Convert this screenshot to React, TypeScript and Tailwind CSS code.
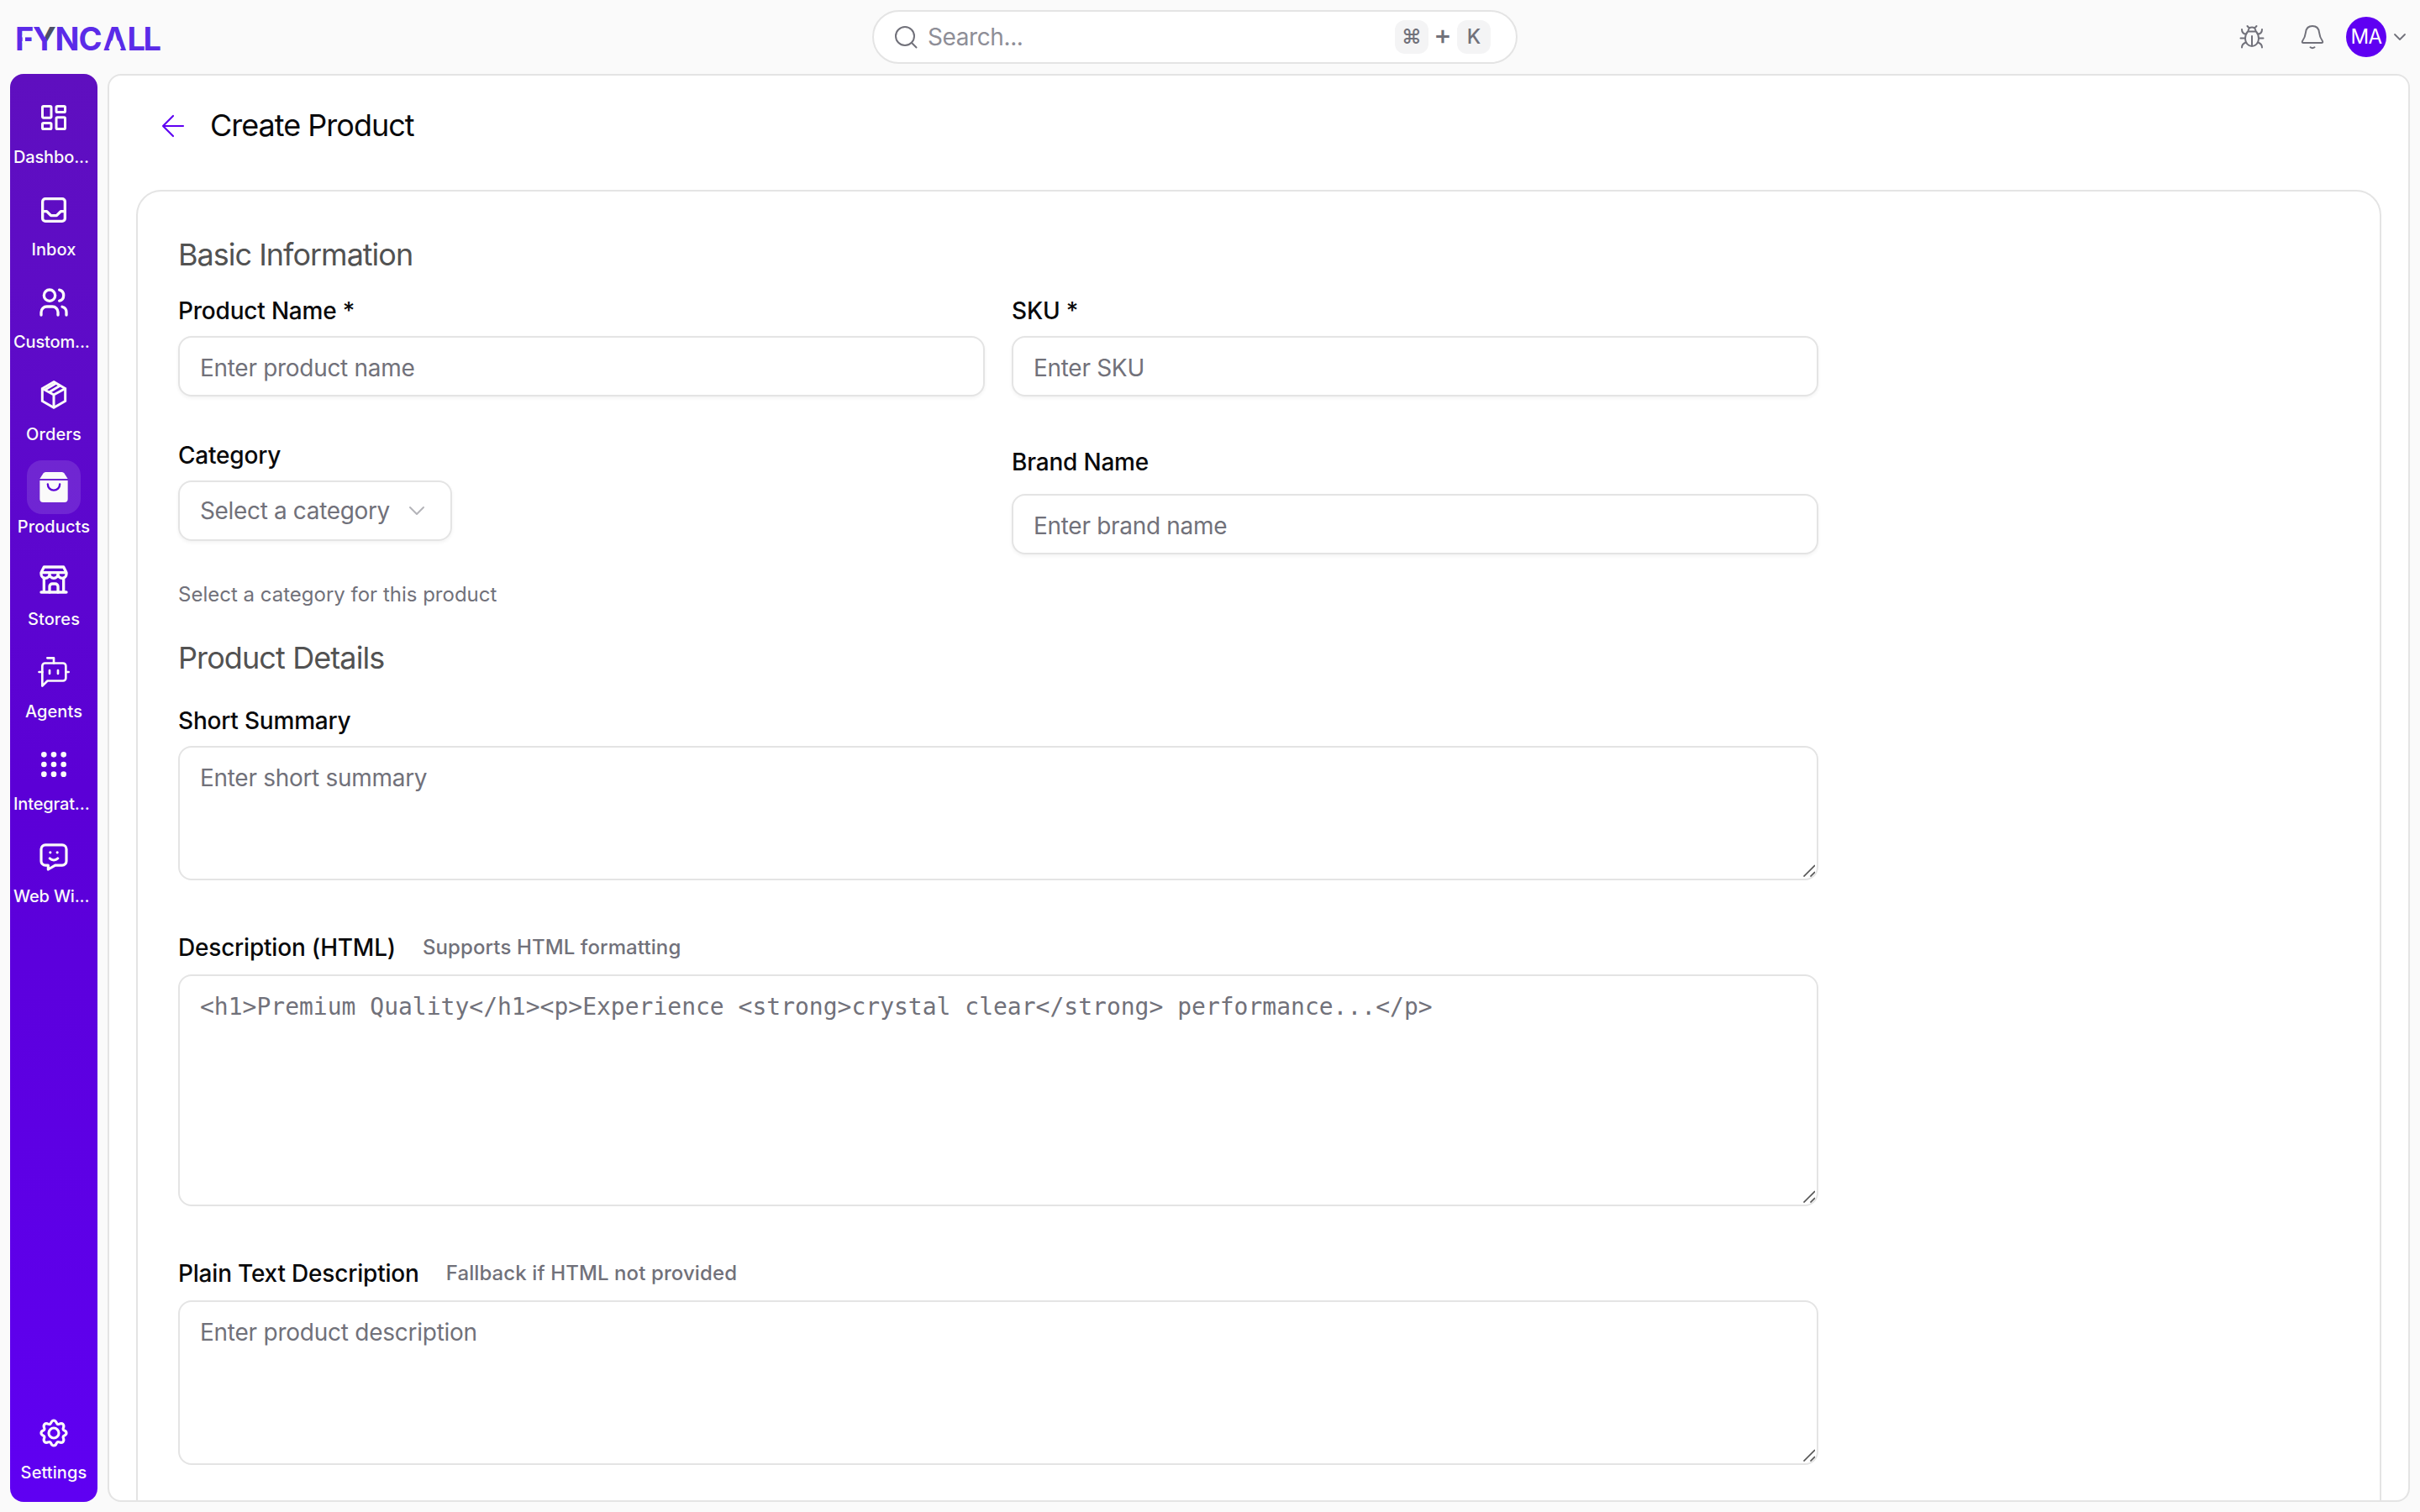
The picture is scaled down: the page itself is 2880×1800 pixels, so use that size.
import type { ReactNode } from 'react'

type NavItem = { label: string; icon: ReactNode; active?: boolean }

function Icon({ size = 40, stroke = 1.5, children }: { size?: number; stroke?: number; children: ReactNode }) {
  return (
    <svg
      width={size}
      height={size}
      viewBox="0 0 24 24"
      fill="none"
      stroke="currentColor"
      strokeWidth={stroke}
      strokeLinecap="round"
      strokeLinejoin="round"
    >
      {children}
    </svg>
  )
}

const navItems: NavItem[] = [
  {
    label: 'Dashbo...',
    icon: (
      <Icon stroke={1.8}>
        <rect x="3.9" y="3.9" width="6.3" height="8.2" rx="0.8" />
        <rect x="13.8" y="3.9" width="6.3" height="4.2" rx="0.8" />
        <rect x="3.9" y="15.9" width="6.3" height="4.2" rx="0.8" />
        <rect x="13.8" y="11.9" width="6.3" height="8.2" rx="0.8" />
      </Icon>
    ),
  },
  {
    label: 'Inbox',
    icon: (
      <Icon stroke={2}>
        <rect x="4" y="4" width="16" height="16" rx="2" />
        <path d="M4 13h3l3 3h4l3-3h3" />
      </Icon>
    ),
  },
  {
    label: 'Custom...',
    icon: (
      <Icon stroke={2}>
        <circle cx="9" cy="7" r="4" />
        <path d="M3 21v-2a4 4 0 0 1 4-4h4a4 4 0 0 1 4 4v2" />
        <path d="M16 3.13a4 4 0 0 1 0 7.75" />
        <path d="M21 21v-2a4 4 0 0 0-3-3.85" />
      </Icon>
    ),
  },
  {
    label: 'Orders',
    icon: (
      <Icon stroke={1.8}>
        <path d="M12 2.8l8.2 4.7v9L12 21.2l-8.2-4.7v-9z" strokeLinejoin="miter" />
        <path d="M12 12l8.2-4.5M12 12v9M12 12L3.8 7.5M8.8 10l7.600-4.500M6 8.300l7.600-4.500" strokeLinecap="butt" />
      </Icon>
    ),
  },
  {
    label: 'Products',
    active: true,
    icon: (
      <Icon stroke={1.4}>
        <path d="M2 6L4.5 2.1Q5.100 1.2 6.200 1.2h11.600q1.100 0 1.700.9L22 6z" fill="currentColor" stroke="none" />
        <path d="M2 7.2h20v13.200a2.400 2.400 0 0 1-2.400 2.400H4.400a2.400 2.400 0 0 1-2.400-2.400z" fill="currentColor" stroke="none" />
        <path d="M7.700 9.900a4.300 4.300 0 0 0 8.600 0" stroke="#5b00d8" />
      </Icon>
    ),
  },
  {
    label: 'Stores',
    icon: (
      <Icon stroke={2}>
        <path d="M3 21h18M5 21V11M19 21V11" />
        <path d="M3 7v1a3 3 0 0 0 6 0V7m0 1a3 3 0 0 0 6 0V7m0 1a3 3 0 0 0 6 0V7H3l2-4h14l2 4" />
        <path d="M9 21v-4a2 2 0 0 1 2-2h2a2 2 0 0 1 2 2v4" />
      </Icon>
    ),
  },
  {
    label: 'Agents',
    icon: (
      <Icon stroke={1.6}>
        <path d="M12 5.700V2H7.400" />
        <path d="M3.800 22V7.700a2 2 0 0 1 2-2h12.800a2 2 0 0 1 2 2v8.600a2 2 0 0 1-2 2H7.500z" />
        <path d="M1.500 12h2.300M20.600 12h2M9 10.800v2.400M15 10.800v2.400" />
      </Icon>
    ),
  },
  {
    label: 'Integrat...',
    icon: (
      <Icon stroke={2}>
        {[5, 12, 19].map((y) => [5, 12, 19].map((x) => <circle key={`${x}-${y}`} cx={x} cy={y} r="1" />))}
      </Icon>
    ),
  },
  {
    label: 'Web Wi...',
    icon: (
      <Icon stroke={1.9}>
        <path d="M8 21v-2.900H6a3 3 0 0 1-3-3V6.500a3 3 0 0 1 3-3h12a3 3 0 0 1 3 3v8.600a3 3 0 0 1-3 3h-5z" />
        <path d="M9.500 8.900h.01M14.500 8.900h.01M9.200 13.200a3.900 3.900 0 0 0 5.600 0" />
      </Icon>
    ),
  },
]

const settingsItem: NavItem = {
  label: 'Settings',
  icon: (
    <Icon stroke={1.9}>
      <path d="M12 1c1.300 0 1.600.8 2 1.800.3.8 1 1.100 1.800.8 1-.5 1.900-.7 2.800.1.900.9.600 1.800.2 2.700-.4.800 0 1.500.8 1.800 1 .4 1.400.8 1.400 1.800s-.5 1.400-1.400 1.800c-.8.300-1.200 1-.8 1.800.4.900.6 1.800-.2 2.700-.9.800-1.800.6-2.800.2-.8-.4-1.500 0-1.800.8-.4 1-.8 1.700-2 1.700s-1.600-.7-2-1.700c-.3-.8-1-1.200-1.800-.8-1 .4-1.900.6-2.800-.2-.8-.9-.6-1.800-.2-2.700.4-.8 0-1.500-.8-1.800C3.500 11.400 3 11 3 10s.5-1.400 1.400-1.800c.8-.3 1.200-1 .8-1.800-.4-.9-.6-1.800.2-2.700.9-.8 1.800-.6 2.800-.1.800.3 1.500 0 1.800-.8.4-1 .7-1.800 2-1.800z" transform="translate(0 2)" />
      <circle cx="12" cy="12" r="3.600" />
    </Icon>
  ),
}

function NavLink({ item }: { item: NavItem }) {
  return (
    <a className="flex h-[94px] w-full flex-col items-center text-[#fafafa]">
      <span
        className={
          item.active
            ? 'flex size-16 items-center justify-center rounded-[18px] bg-white/12'
            : 'flex size-16 items-center justify-center'
        }
      >
        {item.icon}
      </span>
      <span
        className={
          item.label.endsWith('...')
            ? 'w-[96px] whitespace-nowrap text-[20px]/[30px] font-medium tracking-[-0.15px]'
            : 'w-[96px] whitespace-nowrap text-center text-[20px]/[30px] font-medium tracking-[0.1px]'
        }
      >
        {item.label}
      </span>
    </a>
  )
}

function Sidebar() {
  return (
    <aside className="flex w-[104px] shrink-0 flex-col items-center justify-between rounded-2xl bg-linear-to-b from-[#5f0fbf] via-[#5b00d6] to-[#5f00f2] py-5">
      <nav className="flex w-full flex-col gap-4">
        {navItems.map((item) => (
          <NavLink key={item.label} item={item} />
        ))}
      </nav>
      <NavLink item={settingsItem} />
    </aside>
  )
}

function Logo() {
  return (
    <svg width="200" height="60" viewBox="-10 -10 200 60">
      <defs>
        <linearGradient id="logo-y" gradientUnits="userSpaceOnUse" x1="24" y1="25.5" x2="44" y2="14.5">
          <stop offset="0.5" stopColor="#5b2be8" />
          <stop offset="0.5" stopColor="#4b5066" />
        </linearGradient>
      </defs>
      <text y="36.3" className="font-['Inter'] text-[38px] font-bold" fill="#5b2be8" x="-2 19 45.5 73.5 102.5 131.5 150.5">
        F<tspan fill="url(#logo-y)">Y</tspan>NCALL
      </text>
      <path d="M112.500 24.500h8.500l3.500 9.500h-15.500z" fill="#fafafa" />
      <path d="M6.700 18h3.300v9H6.700z" fill="#fafafa" />
    </svg>
  )
}

function Header() {
  return (
    <header className="flex h-[88px] shrink-0 items-center pr-4 pl-[10px]">
      <div className="w-[1028px] shrink-0">
        <Logo />
      </div>
      <div className="flex h-16 w-[768px] shrink-0 items-center rounded-full border-2 border-[#e4e4e4] bg-white pl-6 pr-[30px] text-[#71717a]">
        <svg width="28" height="28" viewBox="0 0 28 28" fill="none" stroke="currentColor" strokeWidth="2" strokeLinecap="round">
          <circle cx="13" cy="13" r="11" />
          <path d="M21 21l5.500 5.500" />
        </svg>
        <span className="ml-3 flex-1 text-[28px] tracking-[-0.4px] text-[#8e8e97]">Search...</span>
        <div className="flex items-center gap-2 text-[24px] font-medium">
          <kbd className="flex size-10 items-center justify-center rounded-xl bg-[#f4f4f5] font-['Inter'] text-[24px]">⌘</kbd>
          <span className="flex w-[18px] justify-center pb-1 text-[32px]/[36px]">+</span>
          <kbd className="flex size-10 items-center justify-center rounded-xl bg-[#f4f4f5] font-['Inter'] text-[24px]">K</kbd>
        </div>
      </div>
      <div className="flex flex-1 items-center justify-end text-[#71717a]">
        <svg width="32" height="32" viewBox="0 0 32 32" fill="none" stroke="currentColor" strokeWidth="2" strokeLinecap="round" strokeLinejoin="round">
          <path d="M11 9.500h10q3 3.500 3 8.500a8 9 0 0 1-16 0q0-5 3-8.500zM16 15v11.500M11.500 9.300c0-6.400 9-6.400 9 0M10.500 3l2.300 2.500M21.500 3l-2.300 2.500M2.500 17.500H8M24 17.500h5.500M4 7c0 4 2 5.300 5 6M28 7c0 4-2 5.300-5 6M4 28.500c0-3.500 2-5 4.700-6M28 28.500c0-3.500-2-5-4.700-6" />
        </svg>
        <svg className="ml-10" width="32" height="32" viewBox="0 0 32 32" fill="none" stroke="currentColor" strokeWidth="2" strokeLinecap="round" strokeLinejoin="round">
          <path d="M5.200 23h21.600q2 0 1.200-2c-3-4-3.500-6-4-10.500C23.400 5 20 3 16 3s-7.400 2-8 7.500C7.500 15 7 17 4 21q-.8 2 1.200 2zM13.500 28.300q2.500 1.800 5 0" />
        </svg>
        <div className="ml-6 flex size-12 items-center justify-center rounded-full bg-[#5f00f2] text-[24px] tracking-[-0.5px] text-white">MA</div>
        <svg className="ml-2" width="16" height="10" viewBox="0 0 16 10" fill="none" stroke="currentColor" strokeWidth="1.800" strokeLinecap="round" strokeLinejoin="round">
          <path d="M2 2l6 6 6-6" />
        </svg>
      </div>
    </header>
  )
}

function Label({ children, hint }: { children: ReactNode; hint?: string }) {
  return (
    <div className="flex items-center gap-8 text-[28px]/[40px] font-medium tracking-[-0.2px] text-[#09090b]">
      <label>{children}</label>
      {hint && <span className="text-[24px]/[36px] tracking-[0.1px] text-[#71717a]">{hint}</span>}
    </div>
  )
}

function TextInput({ placeholder }: { placeholder: string }) {
  return (
    <input
      placeholder={placeholder}
      className="block h-[72px] w-full rounded-2xl border-2 border-[#e4e4e4] bg-white px-6 pt-1 text-[28px] tracking-[-0.3px] shadow-[0_2px_4px_rgba(0,0,0,0.05)] placeholder:text-[#71717a]"
    />
  )
}

function TextArea({ placeholder, className }: { placeholder: string; className: string }) {
  return (
    <div className="relative">
      <textarea
        placeholder={placeholder}
        className={`block w-full resize-none rounded-2xl border-2 border-[#e4e4e4] bg-white px-6 text-[28px]/[40px] placeholder:text-[#71717a] ${className}`}
      />
      <svg className="absolute right-1 bottom-1 text-[#555]" width="16" height="16" viewBox="0 0 16 16" stroke="currentColor" strokeWidth="1.700">
        <path d="M2.500 15.500L16 2M10.500 15.500L16 10" />
      </svg>
    </div>
  )
}

function ProductForm() {
  return (
    <section className="mx-8 mt-4 h-[1700px] rounded-[30px] border-2 border-[#e4e4e4] bg-white px-12">
      <div className="w-[1952px]">
        <h2 className="mt-[51px] text-[36px]/[48px] tracking-[-1px] text-[#525252]">Basic Information</h2>
        <div className="mt-[23px] grid grid-cols-2 gap-x-8">
          <div>
            <Label>Product Name *</Label>
            <div className="mt-[10px]">
              <TextInput placeholder="Enter product name" />
            </div>
          </div>
          <div>
            <Label>SKU *</Label>
            <div className="mt-[10px]">
              <TextInput placeholder="Enter SKU" />
            </div>
          </div>
        </div>
        <div className="mt-[50px] grid grid-cols-2 gap-x-8">
          <div>
            <Label>Category</Label>
            <button className="mt-[10px] flex h-[72px] w-[326px] items-center justify-between rounded-2xl border-2 border-[#e4e4e4] pr-[30px] pl-6 text-[28px] tracking-[-0.35px] text-[#71717a] shadow-[0_2px_4px_rgba(0,0,0,0.05)]">
              Select a category
              <svg width="20" height="12" viewBox="0 0 20 12" fill="none" stroke="#b4b4b9" strokeWidth="2" strokeLinecap="round" strokeLinejoin="round">
                <path d="M2 2l8 8 8-8" />
              </svg>
            </button>
            <p className="mt-[46px] text-[24px]/[36px] text-[#71717a]">Select a category for this product</p>
          </div>
          <div className="pt-2">
            <Label>Brand Name</Label>
            <div className="mt-[18px]">
              <TextInput placeholder="Enter brand name" />
            </div>
          </div>
        </div>
        <h2 className="mt-[33px] text-[36px]/[48px] tracking-[-0.9px] text-[#525252]">Product Details</h2>
        <div className="mt-[31px]">
          <Label>Short Summary</Label>
          <div className="mt-[10px]">
            <TextArea placeholder="Enter short summary" className="h-40 py-4 tracking-[-0.3px]" />
          </div>
        </div>
        <div className="mt-[60px]">
          <Label hint="Supports HTML formatting">Description (HTML)</Label>
          <div className="mt-3">
            <TextArea
              placeholder="<h1>Premium Quality</h1><p>Experience <strong>crystal clear</strong> performance...</p>"
              className="h-[276px] pt-[17px] font-['DejaVu_Sans_Mono',monospace]"
            />
          </div>
        </div>
        <div className="mt-[60px]">
          <Label hint="Fallback if HTML not provided">Plain Text Description</Label>
          <div className="mt-3">
            <TextArea placeholder="Enter product description" className="h-[196px] py-4 tracking-[-0.25px]" />
          </div>
        </div>
      </div>
    </section>
  )
}

export default function App() {
  return (
    <div className="flex h-[1800px] w-[2880px] flex-col overflow-hidden bg-[#fafafa] font-['Inter',sans-serif]">
      <Header />
      <div className="flex h-[1700px] gap-3 px-3">
        <Sidebar />
        <main className="flex-1 overflow-hidden rounded-2xl border-2 border-[#e4e4e4] bg-white">
          <div className="flex h-[120px] items-center pl-[62px]">
            <svg width="28" height="28" viewBox="0 0 28 28" fill="none" stroke="#5f00f2" strokeWidth="2.200" strokeLinecap="round" strokeLinejoin="round">
              <path d="M26 14H2M14 2L2 14l12 12" />
            </svg>
            <h1 className="ml-[30px] pb-0.5 text-[36px]/[48px] tracking-[-1px] text-[#09090b]">Create Product</h1>
          </div>
          <ProductForm />
        </main>
      </div>
    </div>
  )
}
